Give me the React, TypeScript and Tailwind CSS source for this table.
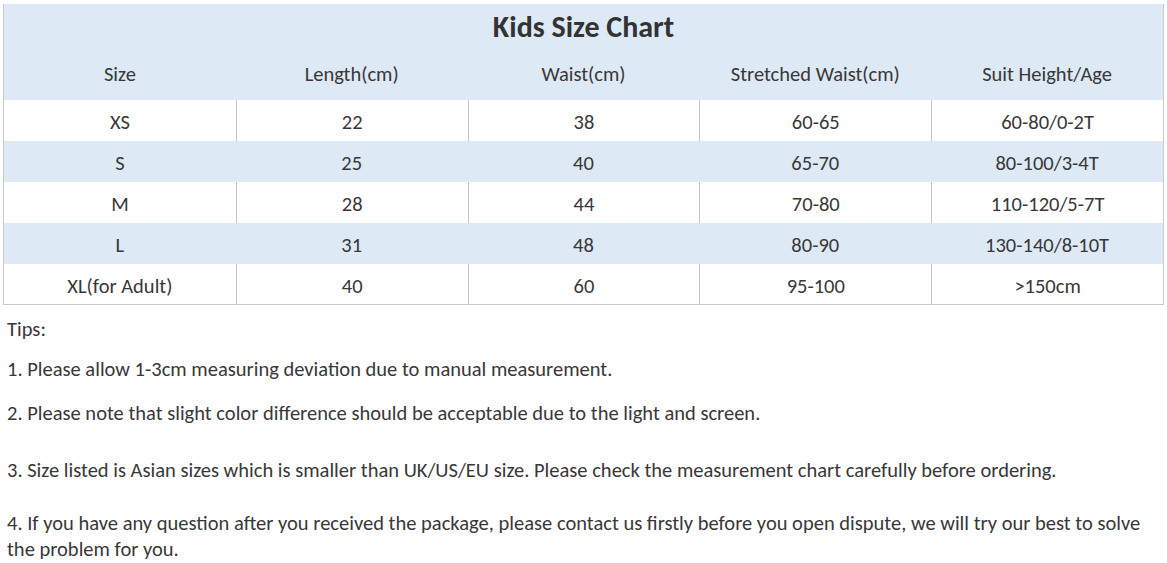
const headers = ["Size", "Length(cm)", "Waist(cm)", "Stretched Waist(cm)", "Suit Height/Age"];

const rows = [
  ["XS", "22", "38", "60-65", "60-80/0-2T"],
  ["S", "25", "40", "65-70", "80-100/3-4T"],
  ["M", "28", "44", "70-80", "110-120/5-7T"],
  ["L", "31", "48", "80-90", "130-140/8-10T"],
  ["XL(for Adult)", "40", "60", "95-100", ">150cm"],
];

const tips = [
  "1. Please allow 1-3cm measuring deviation due to manual measurement.",
  "2. Please note that slight color difference should be acceptable due to the light and screen.",
  "3. Size listed is Asian sizes which is smaller than UK/US/EU size. Please check the measurement chart carefully before ordering.",
  "4. If you have any question after you received the package, please contact us firstly before you open dispute, we will try our best to solve the problem for you.",
];

export default function App() {
  return (
    <div
      className="h-[563px] w-[1167px] overflow-hidden bg-white text-[#383838]"
      style={{ fontFamily: "Carlito, Lato, 'Liberation Sans', sans-serif" }}
    >
      <div className="px-[3px] pt-[4px]">
        <div className="border border-[#c9c9c9] border-t-0">
          <div className="h-[96px] bg-[#dde9f5] pt-[5px]">
            <h1 className="text-center text-[30px] leading-[36px] font-bold text-[#333]">
              Kids Size Chart
            </h1>
            <div className="mt-[13px] grid grid-cols-5">
              {headers.map((h) => (
                <div key={h} className="text-center text-[20.5px] leading-[32px]">
                  {h}
                </div>
              ))}
            </div>
          </div>
          {rows.map((r, i) => (
            <div
              key={r[0]}
              className={`grid grid-cols-5 ${i % 2 === 1 ? "bg-[#dde9f5]" : "bg-white"} ${
                i === rows.length - 1 ? "h-[40px]" : "h-[41px]"
              }`}
            >
              {r.map((c, j) => (
                <div
                  key={j}
                  className={`flex items-center justify-center pt-[4px] text-[20.5px] ${
                    i % 2 === 0 && j > 0 ? "border-l border-[#c4c4c4]" : ""
                  }`}
                >
                  {c}
                </div>
              ))}
            </div>
          ))}
        </div>
      </div>
      <div className="px-[7px] text-[20.5px] leading-[26px]">
        <p className="mt-[11px]">Tips:</p>
        <p className="mt-[14px]">{tips[0]}</p>
        <p className="mt-[18px]">{tips[1]}</p>
        <p className="mt-[31px]">{tips[2]}</p>
        <p className="mt-[27px]">{tips[3]}</p>
      </div>
    </div>
  );
}
